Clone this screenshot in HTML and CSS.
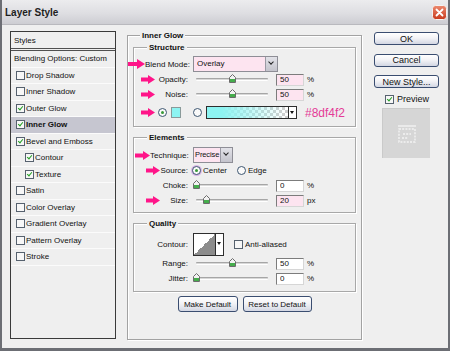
FILE: index.html
```html
<!DOCTYPE html>
<html lang="en">
<head>
  <meta charset="UTF-8" />
  <title>Layer Style</title>
  <link rel="stylesheet" href="styles.css">
</head>
<body>
  <div class="window">
    <div class="titlebar">
      <span class="title">Layer Style</span>
      <svg class="close-btn" width="15" height="15" viewBox="0 0 15 15">
        <defs>
          <linearGradient id="closeGrad" x1="0" y1="0" x2="0" y2="1">
            <stop offset="0" stop-color="#ec8a70" />
            <stop offset="1" stop-color="#c8391c" />
          </linearGradient>
        </defs>
        <rect x="0.5" y="0.5" width="14" height="14" rx="3" fill="url(#closeGrad)" stroke="#f3f3f3" />
        <path d="M4.5 4.5 L10.5 10.5 M10.5 4.5 L4.5 10.5" stroke="#fff" stroke-width="1.8" stroke-linecap="round" />
      </svg>
    </div>

    <div class="main">
      <ul class="style-list">
        <li class="list-head">Styles</li>
        <li class="list-blend">Blending Options: Custom</li>
        <li><span class="check"></span>Drop Shadow</li>
        <li><span class="check"></span>Inner Shadow</li>
        <li><span class="check on"></span>Outer Glow</li>
        <li class="selected"><span class="check on"></span>Inner Glow</li>
        <li><span class="check on"></span>Bevel and Emboss</li>
        <li class="sub"><span class="check on"></span>Contour</li>
        <li class="sub"><span class="check on"></span>Texture</li>
        <li><span class="check"></span>Satin</li>
        <li><span class="check"></span>Color Overlay</li>
        <li><span class="check"></span>Gradient Overlay</li>
        <li><span class="check"></span>Pattern Overlay</li>
        <li><span class="check"></span>Stroke</li>
      </ul>

      <fieldset class="group">
        <legend>Inner Glow</legend>

        <fieldset class="subgroup structure">
          <legend>Structure</legend>
          <div class="row row-tall">
            <div class="label">
              <svg class="mark mark-out" width="17" height="10" viewBox="0 0 17 10"><path d="M0 3 H9 V0 L17 5 L9 10 V7 H0 Z" /></svg>
              <span class="label-text">Blend Mode:</span>
            </div>
            <div class="select blend-select"><span class="select-value">Overlay</span><span class="select-btn"></span></div>
          </div>
          <div class="row">
            <div class="label">
              <svg class="mark" width="14" height="9" viewBox="0 0 14 9"><path d="M0 2.5 H7 V0 L14 4.5 L7 9 V6.5 H0 Z" /></svg>
              <span class="label-text">Opacity:</span>
            </div>
            <div class="track"><svg class="thumb" style="left: 50%" width="7" height="9" viewBox="0 0 7 9"><path d="M0.5 3.5 L3.5 0.5 L6.5 3.5 V8.5 H0.5 Z" fill="#f2f2f2" stroke="#6b6b6b" /><rect x="1" y="5" width="5" height="3" fill="#45ad4c" /></svg></div>
            <input class="field pink" value="50" />
            <span class="unit">%</span>
          </div>
          <div class="row">
            <div class="label">
              <svg class="mark" width="14" height="9" viewBox="0 0 14 9"><path d="M0 2.5 H7 V0 L14 4.5 L7 9 V6.5 H0 Z" /></svg>
              <span class="label-text">Noise:</span>
            </div>
            <div class="track"><svg class="thumb" style="left: 50%" width="7" height="9" viewBox="0 0 7 9"><path d="M0.5 3.5 L3.5 0.5 L6.5 3.5 V8.5 H0.5 Z" fill="#f2f2f2" stroke="#6b6b6b" /><rect x="1" y="5" width="5" height="3" fill="#45ad4c" /></svg></div>
            <input class="field pink" value="50" />
            <span class="unit">%</span>
          </div>
          <div class="row row-color">
            <div class="label">
              <svg class="mark" width="14" height="9" viewBox="0 0 14 9"><path d="M0 2.5 H7 V0 L14 4.5 L7 9 V6.5 H0 Z" /></svg>
              <span class="radio on color-radio"></span>
              <span class="swatch"></span>
            </div>
            <span class="radio gradient-radio"></span>
            <div class="gradient"><span class="gradient-fill"></span><span class="gradient-btn"></span></div>
            <span class="hex">#8df4f2</span>
          </div>
        </fieldset>

        <fieldset class="subgroup elements">
          <legend>Elements</legend>
          <div class="row row-tall">
            <div class="label">
              <svg class="mark mark-near" width="15" height="9" viewBox="0 0 15 9"><path d="M0 2.5 H8 V0 L15 4.5 L8 9 V6.5 H0 Z" /></svg>
              <span class="label-text">Technique:</span>
            </div>
            <div class="select technique-select"><span class="select-value">Precise</span><span class="select-btn"></span></div>
          </div>
          <div class="row">
            <div class="label">
              <svg class="mark mark-far" width="14" height="9" viewBox="0 0 14 9"><path d="M0 2.5 H7 V0 L14 4.5 L7 9 V6.5 H0 Z" /></svg>
              <span class="label-text">Source:</span>
            </div>
            <span class="radio on focus source-radio"></span>
            <span class="radio-text">Center</span>
            <span class="radio edge-radio"></span>
            <span class="radio-text">Edge</span>
          </div>
          <div class="row">
            <div class="label">
              <span class="label-text">Choke:</span>
            </div>
            <div class="track"><svg class="thumb" style="left: 0%" width="7" height="9" viewBox="0 0 7 9"><path d="M0.5 3.5 L3.5 0.5 L6.5 3.5 V8.5 H0.5 Z" fill="#f2f2f2" stroke="#6b6b6b" /><rect x="1" y="5" width="5" height="3" fill="#45ad4c" /></svg></div>
            <input class="field" value="0" />
            <span class="unit">%</span>
          </div>
          <div class="row">
            <div class="label">
              <svg class="mark mark-far" width="14" height="9" viewBox="0 0 14 9"><path d="M0 2.5 H7 V0 L14 4.5 L7 9 V6.5 H0 Z" /></svg>
              <span class="label-text">Size:</span>
            </div>
            <div class="track"><svg class="thumb" style="left: 15%" width="7" height="9" viewBox="0 0 7 9"><path d="M0.5 3.5 L3.5 0.5 L6.5 3.5 V8.5 H0.5 Z" fill="#f2f2f2" stroke="#6b6b6b" /><rect x="1" y="5" width="5" height="3" fill="#45ad4c" /></svg></div>
            <input class="field pink" value="20" />
            <span class="unit">px</span>
          </div>
        </fieldset>

        <fieldset class="subgroup quality">
          <legend>Quality</legend>
          <div class="row row-contour">
            <div class="label">
              <span class="label-text">Contour:</span>
            </div>
            <div class="contour"><span class="contour-ramp"></span><span class="contour-btn"></span></div>
            <span class="check anti-check"></span>
            <span class="check-text">Anti-aliased</span>
          </div>
          <div class="row">
            <div class="label">
              <span class="label-text">Range:</span>
            </div>
            <div class="track"><svg class="thumb" style="left: 50%" width="7" height="9" viewBox="0 0 7 9"><path d="M0.5 3.5 L3.5 0.5 L6.5 3.5 V8.5 H0.5 Z" fill="#f2f2f2" stroke="#6b6b6b" /><rect x="1" y="5" width="5" height="3" fill="#45ad4c" /></svg></div>
            <input class="field" value="50" />
            <span class="unit">%</span>
          </div>
          <div class="row">
            <div class="label">
              <span class="label-text">Jitter:</span>
            </div>
            <div class="track"><svg class="thumb" style="left: 0%" width="7" height="9" viewBox="0 0 7 9"><path d="M0.5 3.5 L3.5 0.5 L6.5 3.5 V8.5 H0.5 Z" fill="#f2f2f2" stroke="#6b6b6b" /><rect x="1" y="5" width="5" height="3" fill="#45ad4c" /></svg></div>
            <input class="field" value="0" />
            <span class="unit">%</span>
          </div>
        </fieldset>

        <div class="btn-row">
          <button class="btn btn-make">Make Default</button>
          <button class="btn btn-reset">Reset to Default</button>
        </div>
      </fieldset>

      <div class="side">
        <button class="btn side-btn">OK</button>
        <button class="btn side-btn">Cancel</button>
        <button class="btn side-btn">New Style...</button>
        <div class="preview-row">
          <span class="check on"></span>
          <span class="preview-text">Preview</span>
        </div>
        <div class="preview-box">
          <svg width="22" height="22" viewBox="0 0 22 22">
            <g fill="none" stroke="#f7f7f7" stroke-width="1.4" stroke-dasharray="2 1.2" opacity="0.9">
              <path d="M2 3 H20" stroke-dasharray="none" />
              <rect x="3" y="6" width="16" height="13" />
              <path d="M7 11 H15 M6 15 H12" />
            </g>
          </svg>
        </div>
      </div>
    </div>
  </div>
</body>
</html>
```

FILE: styles.css
```css
body {
  margin: 0;
  font-family: "Liberation Sans", Arial, sans-serif;
  font-size: 8px;
  color: #111;
  background-color: #efefef;
}

.window {
  width: 450px;
  height: 351px;
  box-sizing: border-box;
  border: 2px solid #6c6e74;
  border-top: none;
  border-bottom-width: 3px;
  background-color: #efefef;
}

/* title bar */
.titlebar {
  height: 24px;
  display: flex;
  align-items: center;
  justify-content: space-between;
  padding: 0 1px 0 3px;
  background: linear-gradient(#ececee, #dedee2 55%, #cdcdd2);
  border-bottom: 1px solid #b9b9be;
}

.title {
  font-size: 10px;
  font-weight: bold;
  color: #1e1e1e;
}

.close-btn {
  display: block;
}

.main {
  display: flex;
  align-items: flex-start;
  padding: 6px 0 0 8px;
}

/* left list of styles */
.style-list {
  list-style: none;
  margin: 0;
  padding: 0;
  width: 106px;
  height: 308px;
  box-sizing: border-box;
  border: 1px solid #3a3a3a;
  background-color: #efefef;
}

.style-list li {
  height: 16.5px;
  box-sizing: border-box;
  display: flex;
  align-items: center;
  padding-left: 5px;
  border-bottom: 1px solid #fbfbfb;
  white-space: nowrap;
}

.style-list .list-head {
  height: 19px;
  padding-left: 3px;
  border-bottom: 3px double #505050;
}

.style-list .list-blend {
  padding-left: 3px;
}

.style-list .sub {
  padding-left: 14px;
}

.style-list .selected {
  background-color: #c6c6d0;
  font-weight: bold;
}

.check {
  position: relative;
  flex: none;
  width: 9px;
  height: 9px;
  box-sizing: border-box;
  border: 1px solid #56616e;
  background-color: #f7f7f7;
  margin-right: 1px;
}

.check.on::after {
  content: "";
  position: absolute;
  left: 2px;
  top: 0;
  width: 2px;
  height: 4px;
  border: solid #23a023;
  border-width: 0 1.5px 1.5px 0;
  transform: rotate(40deg);
}

/* option groups */
.group {
  margin: 0 0 0 11px;
  padding: 0 5px;
  width: 235px;
  height: 309px;
  box-sizing: border-box;
  min-width: 0;
  border: 1px solid #a2a2a2;
  box-shadow: inset 1px 1px 0 #fff, 1px 1px 0 #fff;
}

.group legend,
.subgroup legend {
  padding: 0 2px;
  line-height: 9px;
  font-weight: bold;
  background-color: #efefef;
}

.group > legend {
  margin-left: 7px;
}

.subgroup {
  margin: 6px 0 0;
  padding: 0;
  min-width: 0;
  border: 1px solid #a8a8a8;
  box-shadow: inset 1px 1px 0 #fff, 1px 1px 0 #fff;
}

.subgroup legend {
  margin-left: 13px;
}

.structure {
  margin-top: 3px;
  padding: 4px 0 6px;
}

.elements {
  padding: 5px 0 4px;
}

.quality {
  padding: 5px 0 5px;
}

.row {
  display: flex;
  align-items: center;
  height: 15px;
  white-space: nowrap;
}

.row-tall {
  height: 16px;
}

.row-color {
  margin-top: 3px;
}

.row-contour {
  height: 23px;
}

.label {
  flex: none;
  width: 54px;
  display: flex;
  align-items: center;
}

.label-text {
  margin-left: auto;
}

/* pink annotation arrows */
.mark {
  flex: none;
  fill: #ff1589;
  margin-left: 7px;
}

.mark-out {
  margin-left: -6px;
}

.mark-near {
  margin-left: 1px;
}

.mark-far {
  margin-left: 12px;
}

.select {
  margin-left: 5px;
  height: 16px;
  box-sizing: border-box;
  display: flex;
  border: 1px solid #8e8e96;
  background-color: #fde4f0;
}

.blend-select {
  width: 85px;
}

.technique-select {
  width: 40px;
}

.select-value {
  flex: 1;
  padding-left: 3px;
  line-height: 14px;
  overflow: hidden;
}

.technique-select .select-value {
  padding-left: 1px;
  font-size: 7.5px;
  letter-spacing: -0.1px;
  overflow: visible;
}

.select-btn {
  position: relative;
  flex: none;
  width: 11px;
  border-left: 1px solid #9a9aa4;
  background: linear-gradient(#e2e2e8, #c4c4cc);
}

.select-btn::after {
  content: "";
  position: absolute;
  left: 3px;
  top: 3px;
  width: 3px;
  height: 3px;
  border: solid #222;
  border-width: 0 1.5px 1.5px 0;
  transform: rotate(45deg);
}

/* sliders */
.track {
  position: relative;
  flex: none;
  width: 72px;
  height: 1px;
  margin: 0 8px;
  border-top: 1px solid #a6a6a6;
  border-bottom: 1px solid #fff;
  background-color: #d8d8d8;
  border-radius: 1px;
}

.thumb {
  position: absolute;
  top: -5px;
  margin-left: -3.5px;
}

.field {
  width: 28px;
  height: 12px;
  box-sizing: border-box;
  margin: 0;
  padding: 0 0 0 3px;
  border: 1px solid;
  border-color: #7c7c7c #d6d6d6 #d6d6d6 #7c7c7c;
  background-color: #fff;
  font-family: "Liberation Sans", Arial, sans-serif;
  font-size: 8px;
  color: #111;
  outline: none;
}

.field.pink {
  background-color: #fde4f0;
}

.unit {
  margin-left: 3px;
}

/* color row */
.radio {
  position: relative;
  flex: none;
  width: 9px;
  height: 9px;
  box-sizing: border-box;
  border: 1px solid #3d5670;
  border-radius: 50%;
  background-color: #fafafa;
}

.radio.on::after {
  content: "";
  position: absolute;
  left: 2px;
  top: 2px;
  width: 3px;
  height: 3px;
  border-radius: 50%;
  background-color: #3a9a3a;
}

.radio.focus {
  box-shadow: 0 0 0 1px #d9b3e6;
}

.color-radio {
  margin-left: 3px;
}

.swatch {
  flex: none;
  width: 10px;
  height: 11px;
  box-sizing: border-box;
  margin-left: 4px;
  border: 1px solid #8a9a9a;
  background-color: #8df4f2;
}

.gradient-radio {
  margin-left: 5px;
}

.gradient {
  display: flex;
  width: 91px;
  height: 13px;
  box-sizing: border-box;
  margin-left: 4px;
  border: 1px solid #2e2e2e;
}

.gradient-fill {
  flex: 1;
  background:
    linear-gradient(to right, #8df4f2 18%, rgba(141, 244, 242, 0) 96%),
    repeating-conic-gradient(#cfcfcf 0 25%, #fff 0 50%) 0 0 / 6px 6px;
}

.gradient-btn,
.contour-btn {
  position: relative;
  width: 7px;
  border-left: 1px solid #2e2e2e;
  background-color: #fff;
}

.gradient-btn::after,
.contour-btn::after {
  content: "";
  position: absolute;
  left: 1px;
  top: 4px;
  border-top: 3px solid #111;
  border-left: 2.5px solid transparent;
  border-right: 2.5px solid transparent;
}

.contour-btn::after {
  top: 8px;
}

.hex {
  margin-left: 8px;
  font-size: 12px;
  color: #e43b97;
}

/* source row */
.source-radio {
  margin-left: 4px;
}

.radio-text {
  margin-left: 2px;
}

.edge-radio {
  margin-left: 10px;
}

/* contour */
.contour {
  display: flex;
  margin-left: 5px;
  width: 31px;
  height: 23px;
  box-sizing: border-box;
  border: 1px solid #2e2e2e;
}

.contour-ramp {
  flex: 1;
  background: linear-gradient(to bottom right, #fff 50%, #8c8c8c 50%);
}

.anti-check {
  margin-left: 10px;
}

.check-text {
  margin-left: 1px;
}

/* buttons */
.btn {
  box-sizing: border-box;
  margin: 0;
  padding: 0;
  border: 1px solid #3a4d70;
  border-radius: 3px;
  background: linear-gradient(#ffffff, #f3f3f6 45%, #d3d7e3);
  font-family: "Liberation Sans", Arial, sans-serif;
  font-size: 8px;
  color: #111;
  cursor: pointer;
}

.btn-row {
  display: flex;
  justify-content: center;
  gap: 5px;
  margin-top: 4px;
}

.btn-make {
  width: 60px;
  height: 16px;
}

.btn-reset {
  width: 69px;
  height: 16px;
}

.side {
  display: flex;
  flex-direction: column;
  width: 65px;
  margin-left: 12px;
  padding-top: 1px;
}

.side-btn {
  height: 13px;
  font-size: 9px;
  margin-bottom: 8.5px;
}

.side-btn:last-of-type {
  margin-bottom: 0;
}

.preview-row {
  display: flex;
  align-items: center;
  height: 10px;
  margin: 6px 0 0 11px;
  font-size: 9px;
}

.preview-text {
  margin-left: 2px;
}

.preview-box {
  display: flex;
  align-items: center;
  justify-content: center;
  width: 48px;
  height: 50px;
  margin: 4px 0 0 8px;
  box-sizing: border-box;
  background-color: #d6d6d6;
  border-top: 1px solid #cacaca;
  border-left: 1px solid #cacaca;
}
```
